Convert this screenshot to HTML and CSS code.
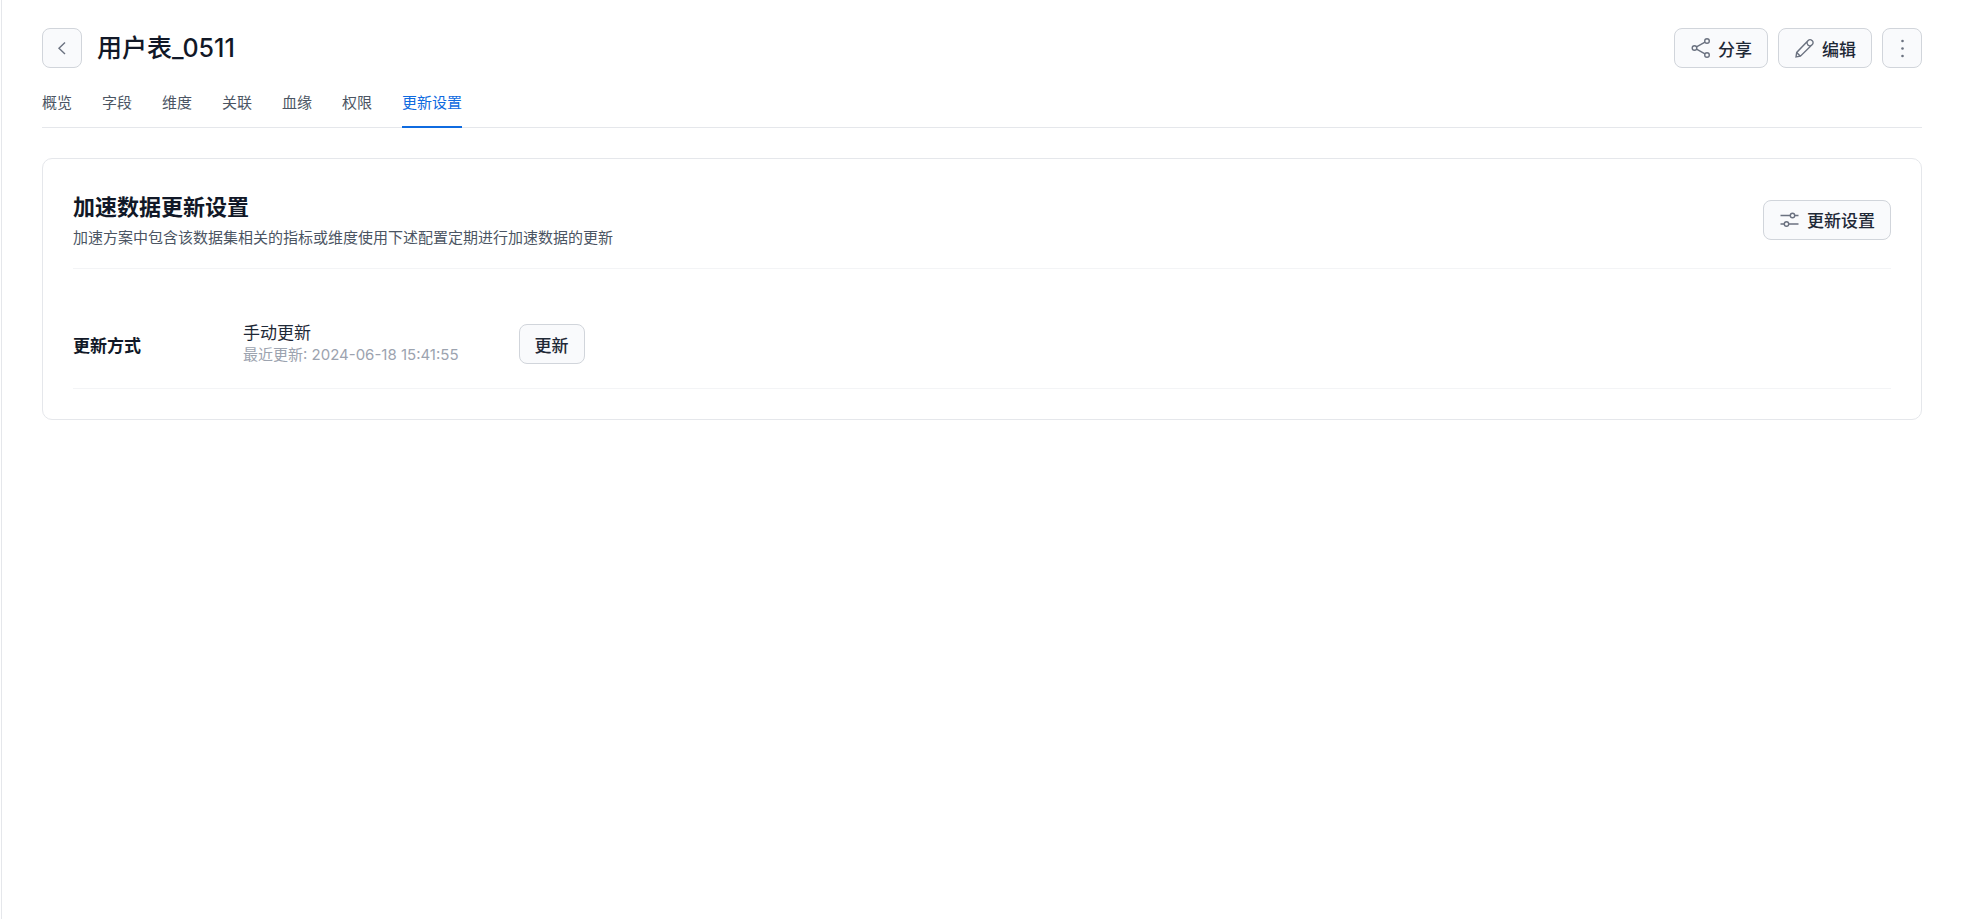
FILE: index.html
```
<!DOCTYPE html>
<html lang="zh-CN">

<head>
    <meta charset="UTF-8">
    <meta name="viewport" content="width=device-width, initial-scale=1.0">
    <title>用户表_0511</title>
    <link rel="stylesheet" href="styles.css">
</head>

<body>
    <main class="page">
        <header class="page-header">
            <button type="button" class="btn btn-icon" aria-label="返回">
                <svg class="icon" viewBox="0 0 22 22"><path d="M14 5.500 8 11.200l6 5.700"/></svg>
            </button>
            <h1>用户表_0511</h1>
            <div class="actions">
                <button type="button" class="btn">
                    <svg class="icon" viewBox="0 0 22 22">
                        <circle cx="4.500" cy="11" r="2.300"/>
                        <circle cx="17" cy="4" r="2.300"/>
                        <circle cx="17" cy="18" r="2.300"/>
                        <path d="M6.500 9.900 15 5.100M6.500 12.100l8.500 4.800"/>
                    </svg>
                    分享
                </button>
                <button type="button" class="btn">
                    <svg class="icon" viewBox="0 0 22 22">
                        <path d="M2 20l.7-4.600L14.200 3.400a2.600 2.600 0 0 1 3.700 0l.4.4a2.600 2.600 0 0 1 0 3.700L6.400 19.200zM13.300 4.500a3 3 0 0 0 4 4M2.700 15.400l3.700 3.800"/>
                    </svg>
                    编辑
                </button>
                <button type="button" class="btn btn-icon" aria-label="更多">
                    <svg class="icon icon-dots" viewBox="0 0 22 22">
                        <circle cx="11.500" cy="4" r="1.300"/>
                        <circle cx="11.500" cy="11.500" r="1.300"/>
                        <circle cx="11.500" cy="19" r="1.300"/>
                    </svg>
                </button>
            </div>
        </header>

        <nav class="tabs">
            <a href="#overview">概览</a>
            <a href="#fields">字段</a>
            <a href="#dimensions">维度</a>
            <a href="#relations">关联</a>
            <a href="#lineage">血缘</a>
            <a href="#permissions">权限</a>
            <a href="#update" class="active" aria-current="page">更新设置</a>
        </nav>

        <section class="card">
            <div class="card-header">
                <div>
                    <h2>加速数据更新设置</h2>
                    <p class="desc">加速方案中包含该数据集相关的指标或维度使用下述配置定期进行加速数据的更新</p>
                </div>
                <button type="button" class="btn">
                    <svg class="icon" viewBox="0 0 22 22">
                        <circle cx="13.500" cy="6.500" r="2.200"/>
                        <circle cx="7.500" cy="15" r="2.200"/>
                        <path d="M1.500 6.500h9.800M15.700 6.500h3.800M1.500 15h3.800M9.700 15h9.800"/>
                    </svg>
                    更新设置
                </button>
            </div>
            <div class="setting-row">
                <h3>更新方式</h3>
                <div class="setting-value">
                    <p class="mode">手动更新</p>
                    <p class="last-update">最近更新: 2024-06-18 15:41:55</p>
                </div>
                <button type="button" class="btn">更新</button>
            </div>
        </section>
    </main>
</body>

</html>
```

FILE: styles.css
```
* {
    box-sizing: border-box;
}

body {
    margin: 0 0 0 1px;
    min-height: 100vh;
    border-left: 1px solid #e5e7eb;
    background: #fff;
    color: #111827;
    font-family: Inter, "Noto Sans CJK SC", sans-serif;
    font-size: 17px;
}

h1,
h2,
h3,
p {
    margin: 0;
    font-weight: 500;
}

.page {
    padding: 28px 40px;
}

.page-header {
    display: flex;
    align-items: center;
    gap: 15px;
}

h1 {
    font-size: 25px;
    line-height: 40px;
}

.actions {
    display: flex;
    gap: 10px;
    margin-left: auto;
}

.btn {
    display: flex;
    align-items: center;
    justify-content: center;
    gap: 6px;
    height: 40px;
    padding: 0 15px;
    border: 1px solid #d1d5db;
    border-radius: 8px;
    background: #f9fafc;
    color: #1f2937;
    font-family: inherit;
    font-size: 17px;
    font-weight: 500;
    white-space: nowrap;
    cursor: pointer;
}

.btn:hover {
    background: #f3f4f6;
}

.btn-icon {
    width: 40px;
    padding: 0;
}

.icon {
    width: 22px;
    height: 22px;
    fill: none;
    stroke: #6b7280;
    stroke-width: 1.400;
}

.icon-dots {
    fill: #6b7280;
    stroke: none;
}

.tabs {
    display: flex;
    gap: 30px;
    margin-top: 10px;
    border-bottom: 1px solid #e5e7eb;
}

.tabs a {
    height: 50px;
    margin-bottom: -1px;
    color: #4b5563;
    font-size: 15px;
    line-height: 50px;
    text-decoration: none;
}

.tabs .active {
    border-bottom: 2px solid #0f6be0;
    color: #0f6be0;
}

.card {
    margin-top: 30px;
    padding: 30px;
    border: 1px solid #e5e7eb;
    border-radius: 10px;
}

.card-header {
    display: flex;
    align-items: center;
    justify-content: space-between;
    padding-bottom: 18px;
    border-bottom: 1px solid #f3f4f6;
}

h2 {
    font-size: 22px;
    font-weight: 600;
    line-height: 36px;
}

.desc {
    color: #4b5563;
    font-size: 15px;
    font-weight: 400;
    line-height: 25px;
}

.setting-row {
    display: flex;
    align-items: center;
    margin-top: 30px;
    padding: 23px 0 22px;
    border-bottom: 1px solid #f3f4f6;
}

h3 {
    width: 170px;
    font-size: 17px;
    font-weight: 600;
}

.setting-value {
    margin-right: 60px;
}

.mode {
    color: #1f2937;
    font-weight: 400;
    line-height: 22px;
}

.last-update {
    color: #9ca3af;
    font-size: 15px;
    font-weight: 400;
    line-height: 22px;
}
```
